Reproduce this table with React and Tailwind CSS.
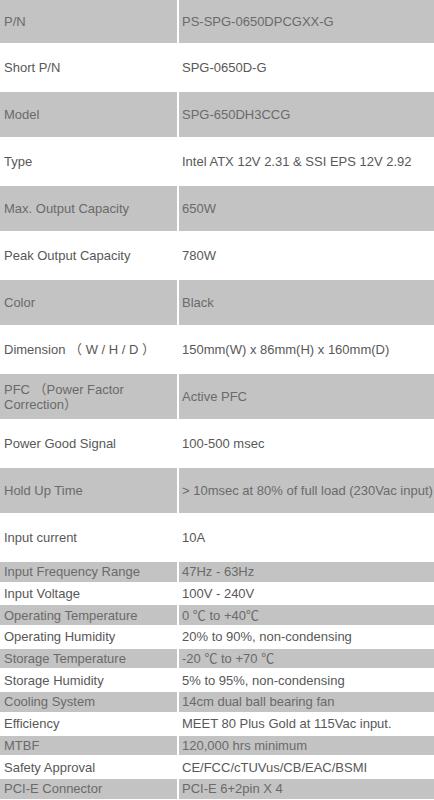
const big = [
  ["P/N", "PS-SPG-0650DPCGXX-G"],
  ["Short P/N", "SPG-0650D-G"],
  ["Model", "SPG-650DH3CCG"],
  ["Type", "Intel ATX 12V 2.31 & SSI EPS 12V 2.92"],
  ["Max. Output Capacity", "650W"],
  ["Peak Output Capacity", "780W"],
  ["Color", "Black"],
  ["Dimension （ W / H / D ）", "150mm(W) x 86mm(H) x 160mm(D)"],
  ["PFC （Power Factor Correction）", "Active PFC"],
  ["Power Good Signal", "100-500 msec"],
  ["Hold Up Time", "> 10msec at 80% of full load (230Vac input)"],
  ["Input current", "10A"],
];

const small = [
  ["Input Frequency Range", "47Hz - 63Hz"],
  ["Input Voltage", "100V - 240V"],
  ["Operating Temperature", "0 ℃ to +40℃"],
  ["Operating Humidity", "20% to 90%, non-condensing"],
  ["Storage Temperature", "-20 ℃ to +70 ℃"],
  ["Storage Humidity", "5% to 95%, non-condensing"],
  ["Cooling System", "14cm dual ball bearing fan"],
  ["Efficiency", "MEET 80 Plus Gold at 115Vac input."],
  ["MTBF", "120,000 hrs minimum"],
  ["Safety Approval", "CE/FCC/cTUVus/CB/EAC/BSMI"],
  ["PCI-E Connector", "PCI-E 6+2pin X 4"],
];

function Row({ label, value, grey, h }) {
  const bg = grey ? "bg-[#c3c3c3] text-[#6a6a6a]" : "bg-white text-[#585858]";
  return (
    <div className={"flex gap-[2px] " + h}>
      <div className={"w-[177px] shrink-0 flex items-center pl-[4px] pr-1 leading-[15px] " + bg}>
        {label}
      </div>
      <div className={"flex-1 flex items-center pl-[3px] leading-[15px] whitespace-nowrap " + bg}>
        {value}
      </div>
    </div>
  );
}

export default function App() {
  return (
    <div
      className="w-[434px] h-[800px] overflow-hidden bg-white flex flex-col gap-[2px] text-[13px]"
      style={{ fontFamily: '"Liberation Sans", Arial, "Noto Sans CJK SC", sans-serif' }}
    >
      {big.map(([l, v], i) => (
        <Row key={l} label={l} value={v} grey={i % 2 === 0} h={i === 0 ? "h-[43px] shrink-0" : "h-[45px] shrink-0"} />
      ))}
      {small.map(([l, v], i) => (
        <Row key={l} label={l} value={v} grey={i % 2 === 0} h="h-[19.7px] shrink-0" />
      ))}
    </div>
  );
}
